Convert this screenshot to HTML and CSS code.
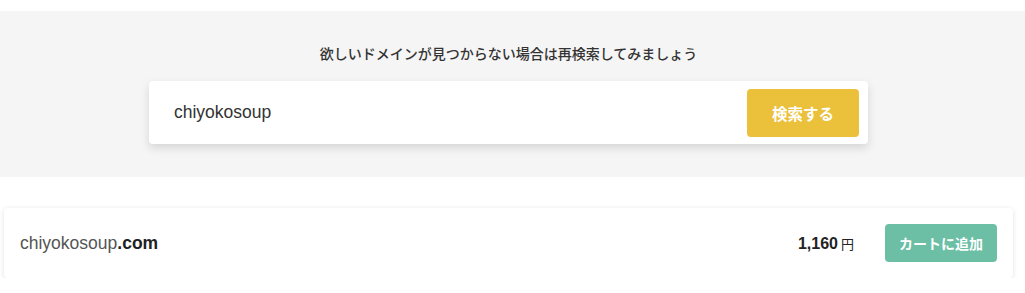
FILE: index.html
```html
<!DOCTYPE html>
<html lang="ja">
<head>
<meta charset="utf-8">
<title>ドメイン検索</title>
<link rel="stylesheet" href="styles.css">
</head>
<body>
<section class="band">
  <div class="band-inner">
    <p class="lead">欲しいドメインが見つからない場合は再検索してみましょう</p>
    <form class="search-card">
      <span class="query">chiyokosoup</span>
      <button type="button" class="search-btn">検索する</button>
    </form>
  </div>
</section>
<main class="page">
  <div class="result-card">
    <div class="domain">chiyokosoup<b>.com</b></div>
    <div class="price">1,160<span class="yen">円</span></div>
    <button type="button" class="cart-btn">カートに追加</button>
  </div>
</main>
</body>
</html>
```

FILE: styles.css
```css
html, body {
  margin: 0;
  padding: 0;
  background: #ffffff;
}
body {
  font-family: "Liberation Sans", "Noto Sans CJK JP", sans-serif;
  color: #333;
}
.band {
  margin-top: 11px;
  background: #f5f5f5;
  height: 166px;
}
.band-inner {
  width: 1017px;
  padding-top: 32px;
}
.lead {
  margin: 0;
  text-align: center;
  font-family: "Noto Sans CJK JP", sans-serif;
  font-size: 14px;
  font-weight: 500;
  line-height: 20px;
  color: #333;
}
.search-card {
  margin: 18px auto 0;
  width: 719px;
  height: 63px;
  box-sizing: border-box;
  background: #fff;
  border-radius: 4px;
  box-shadow: 0 4px 10px rgba(0, 0, 0, 0.13);
  display: flex;
  align-items: center;
  padding: 0 9px 0 25px;
}
.query {
  flex: 1;
  font-size: 17.5px;
  color: #333;
}
.search-btn {
  width: 112px;
  height: 48px;
  border: none;
  border-radius: 4px;
  background: #ebc03b;
  color: #fff;
  font-family: "Noto Sans CJK JP", sans-serif;
  font-weight: bold;
  font-size: 15.5px;
  padding: 0;
}
.page {
  width: 1017px;
}
.result-card {
  margin: 31px 4px 0;
  height: 70px;
  box-sizing: border-box;
  background: #fff;
  border-radius: 4px;
  box-shadow: 0 1px 5px rgba(0, 0, 0, 0.12);
  display: flex;
  align-items: center;
  padding: 0 16px;
}
.domain {
  flex: 1;
  font-size: 17.5px;
  color: #555;
}
.domain b {
  color: #222;
  font-weight: bold;
}
.price {
  font-size: 16px;
  font-weight: bold;
  color: #222;
  margin-right: 31px;
}
.yen {
  font-family: "Noto Sans CJK JP", sans-serif;
  font-weight: normal;
  font-size: 13px;
  margin-left: 3px;
}
.cart-btn {
  width: 112px;
  height: 38px;
  border: none;
  border-radius: 4px;
  background: #6cbea5;
  color: #fff;
  font-family: "Noto Sans CJK JP", sans-serif;
  font-weight: bold;
  font-size: 14px;
  padding: 0;
}
```
